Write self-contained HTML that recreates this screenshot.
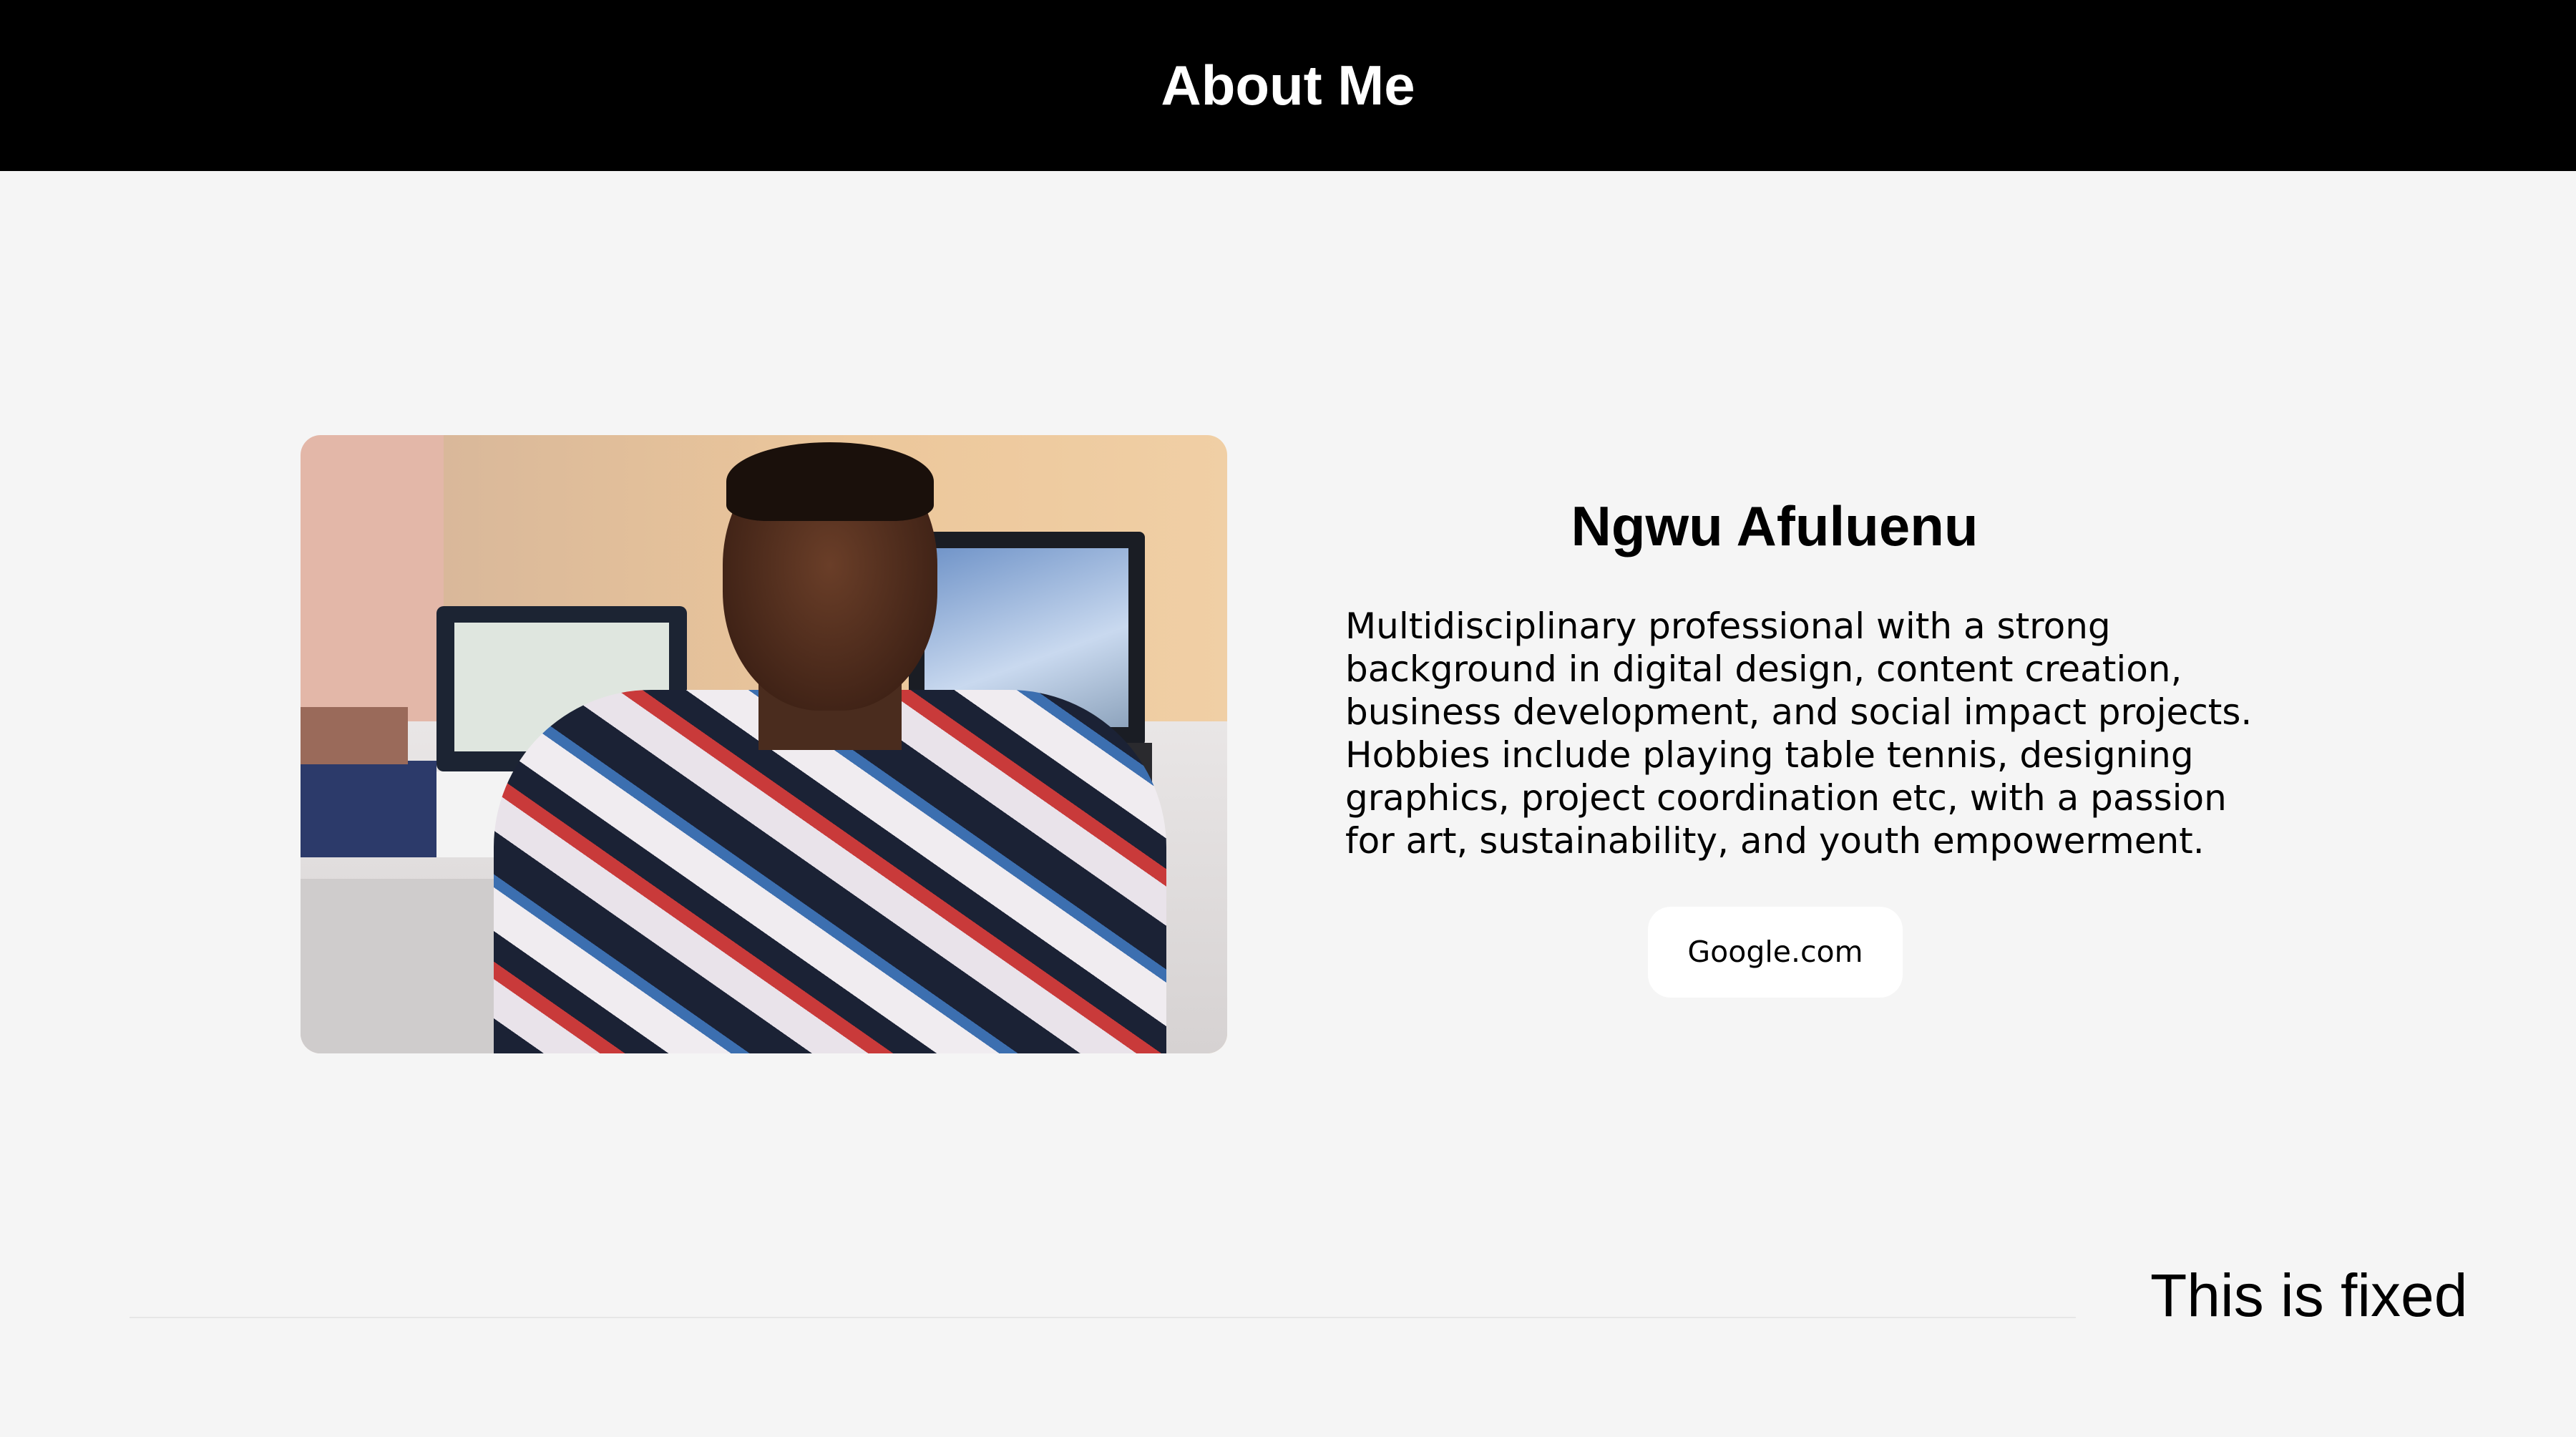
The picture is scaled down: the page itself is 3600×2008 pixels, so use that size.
<!DOCTYPE html>
<html><head><meta charset="utf-8"><style>
*{margin:0;padding:0;box-sizing:border-box}
body{width:3600px;height:2008px;background:#f5f5f5;position:relative;overflow:hidden;font-family:"DejaVu Sans","Liberation Sans",sans-serif;color:#000}
header{position:absolute;left:0;top:0;width:3600px;height:239px;background:#000;color:#fff;text-align:center;font:bold 78px/239px "Liberation Sans",sans-serif}
.photo{position:absolute;left:420px;top:608px;width:1295px;height:864px;border-radius:28px;overflow:hidden;background:linear-gradient(90deg,#e3b7a8 0,#e3b7a8 200px,#d9b89a 200px,#ecc79b 60%,#f0cfa5 100%)}
.photo div{position:absolute}
h2{position:absolute;left:1980px;width:1000px;top:690px;text-align:center;font:bold 78px "Liberation Sans",sans-serif}
p{position:absolute;left:1880px;top:845px;width:1300px;font-size:50px;line-height:60px}
.btn{position:absolute;left:2303px;top:1267px;width:356px;height:127px;background:#fff;border-radius:32px;text-align:center;font-size:41px;line-height:127px}
hr{position:absolute;left:181px;top:1840px;width:2720px;border:0;border-top:2px solid #e6e6e6}
.fixed{position:absolute;left:3005px;top:1762px;font:84px "Liberation Sans",sans-serif}
</style></head><body>
<header>About Me</header>
<div class="photo">
 <div style="left:0;top:400px;width:1295px;height:464px;background:linear-gradient(180deg,#e9e6e6,#d6d2d2)"></div>
 <div style="left:0;top:620px;width:300px;height:244px;background:#cfcccc"></div>
 <div style="left:0;top:455px;width:190px;height:135px;background:#2c3a6a"></div>
 <div style="left:0;top:380px;width:150px;height:80px;background:#9a6a5a"></div>
 <div style="left:190px;top:239px;width:350px;height:231px;background:#1c2433;border-radius:10px"></div>
 <div style="left:215px;top:262px;width:300px;height:180px;background:#dfe6df"></div>
 <div style="left:850px;top:135px;width:330px;height:300px;background:#1a1d24;border-radius:8px"></div>
 <div style="left:872px;top:158px;width:285px;height:250px;background:linear-gradient(160deg,#6f93c8,#c9d9ef 60%,#8ea4bd)"></div>
 <div style="left:840px;top:430px;width:350px;height:220px;background:#2a2a2e"></div>
 <div style="left:190px;top:470px;width:260px;height:120px;background:#f3f3f3"></div>
 <div style="left:270px;top:356px;width:940px;height:520px;border-radius:220px 220px 0 0;background:repeating-linear-gradient(35deg,#1b2235 0 50px,#e9e3ea 50px 95px,#c93a3a 95px 115px,#1b2235 115px 150px,#f0ecf0 150px 200px,#3c6fb0 200px 215px)"></div>
 <div style="left:640px;top:300px;width:200px;height:140px;background:#4a2c1e"></div>
 <div style="left:590px;top:15px;width:300px;height:370px;border-radius:45%;background:radial-gradient(ellipse at 50% 45%,#6a3e28,#3f2216 75%)"></div>
 <div style="left:595px;top:10px;width:290px;height:110px;border-radius:50% 50% 20% 20%;background:#1a100b"></div>
</div>
<h2>Ngwu Afuluenu</h2>
<p>Multidisciplinary professional with a strong background in digital design, content creation, business development, and social impact projects. Hobbies include playing table tennis, designing graphics, project coordination etc, with a passion for art, sustainability, and youth empowerment.</p>
<div class="btn">Google.com</div>
<hr>
<div class="fixed">This is fixed</div>
</body></html>
